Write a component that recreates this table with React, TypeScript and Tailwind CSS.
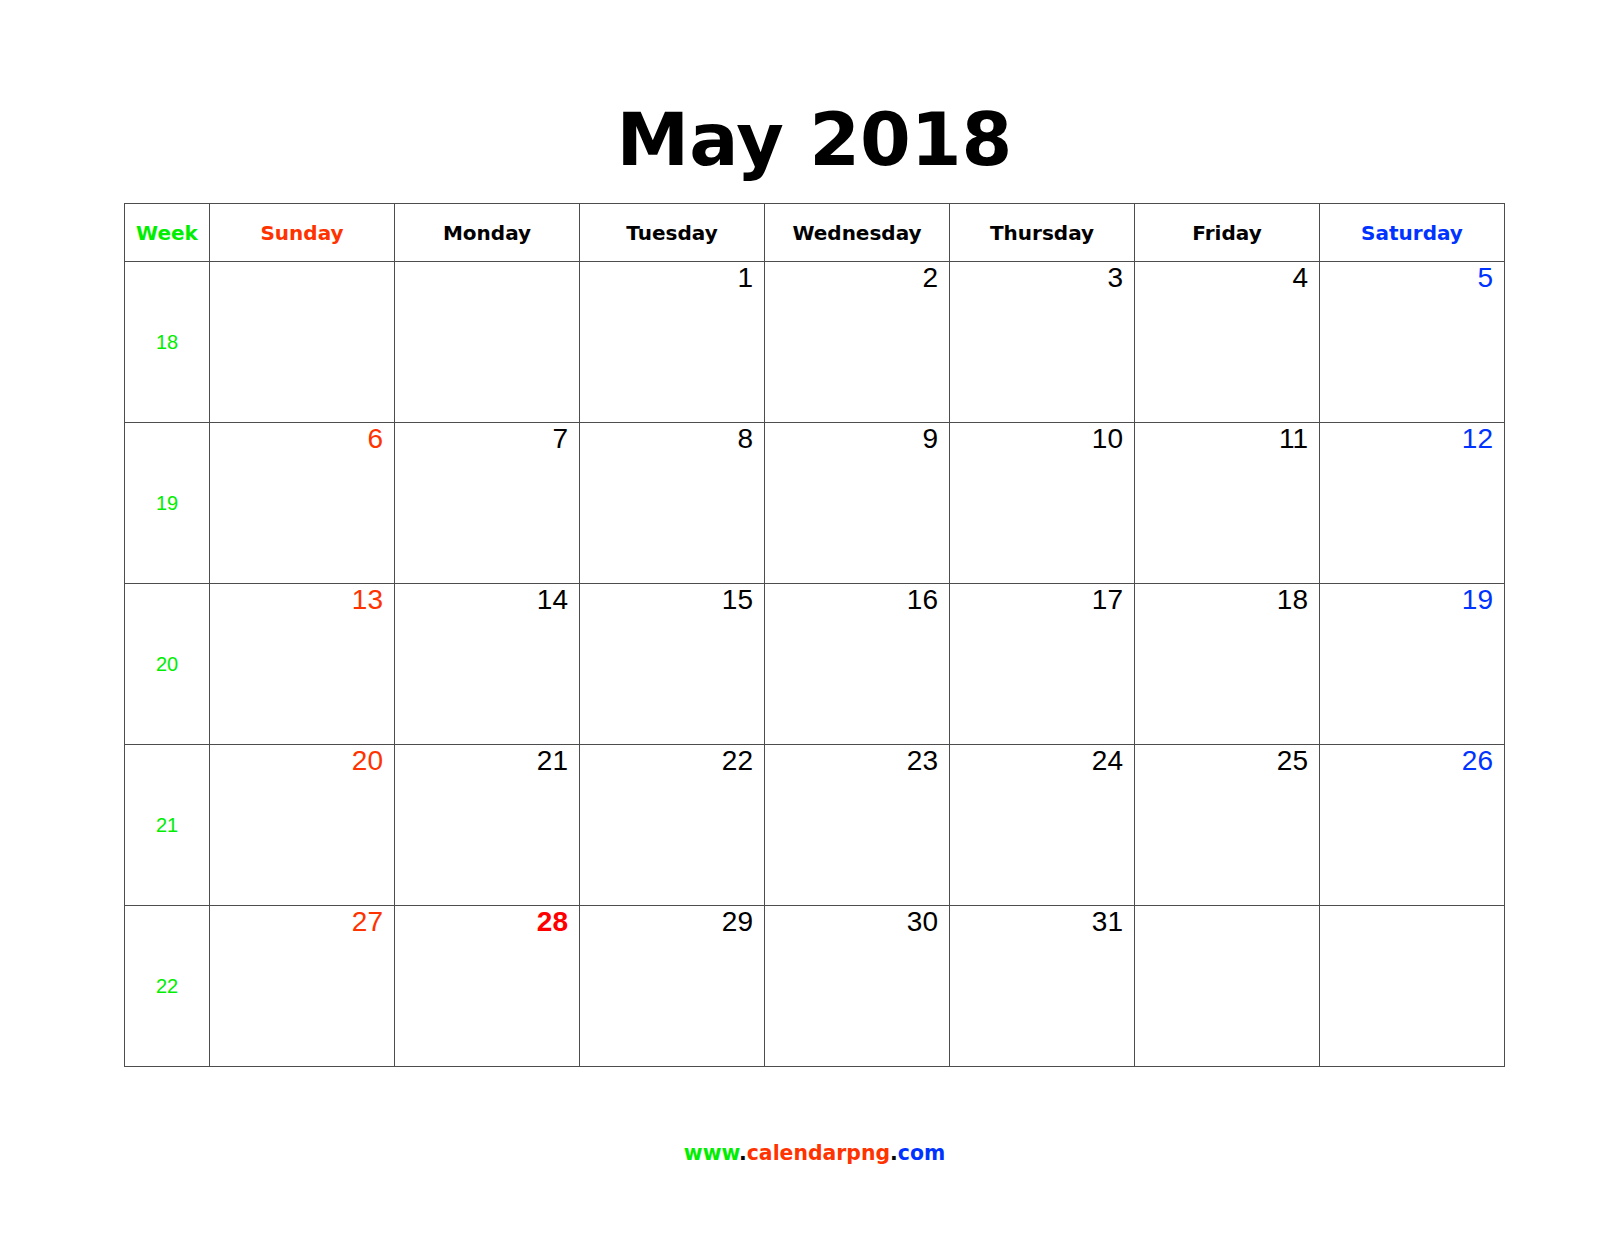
import React from "react";

const days = [
  { name: "Sunday", color: "text-[#ff3300]" },
  { name: "Monday", color: "text-black" },
  { name: "Tuesday", color: "text-black" },
  { name: "Wednesday", color: "text-black" },
  { name: "Thursday", color: "text-black" },
  { name: "Friday", color: "text-black" },
  { name: "Saturday", color: "text-[#0033ff]" },
];

const weeks: { wk: number; dates: (number | null)[] }[] = [
  { wk: 18, dates: [null, null, 1, 2, 3, 4, 5] },
  { wk: 19, dates: [6, 7, 8, 9, 10, 11, 12] },
  { wk: 20, dates: [13, 14, 15, 16, 17, 18, 19] },
  { wk: 21, dates: [20, 21, 22, 23, 24, 25, 26] },
  { wk: 22, dates: [27, 28, 29, 30, 31, null, null] },
];

const verdana = { fontFamily: '"DejaVu Sans", Verdana, sans-serif' };
const arial = { fontFamily: '"Liberation Sans", Arial, sans-serif' };

export default function App() {
  return (
    <div className="w-[1600px] h-[1236px] bg-white pl-[124px]">
      <div className="w-[1381px]">
        <h1
          className="pt-[103px] text-center text-[73px] font-bold leading-none text-black"
          style={verdana}
        >
          May 2018
        </h1>
        <div className="mt-[27px] grid grid-cols-[85px_repeat(7,185px)] border-t border-l border-[#4d4d4d]">
          <div
            className="h-[58px] flex items-center justify-center pt-[1px] border-r border-b border-[#4d4d4d] text-[20px] font-bold leading-none text-[#00ee00]"
            style={verdana}
          >
            Week
          </div>
          {days.map((d) => (
            <div
              key={d.name}
              className={`h-[58px] flex items-center justify-center pt-[1px] border-r border-b border-[#4d4d4d] text-[20px] font-bold leading-none ${d.color}`}
              style={verdana}
            >
              {d.name}
            </div>
          ))}
          {weeks.map((w) => (
            <React.Fragment key={w.wk}>
              <div
                className="h-[161px] flex items-center justify-center border-r border-b border-[#4d4d4d] text-[20px] leading-none text-[#00ee00]"
                style={arial}
              >
                {w.wk}
              </div>
              {w.dates.map((dt, i) => {
                let cls = "text-black";
                if (i === 0) cls = "text-[#ff3300]";
                if (i === 6) cls = "text-[#0033ff]";
                if (dt === 28) cls = "text-[#ff0000] font-bold";
                return (
                  <div
                    key={i}
                    className={`h-[161px] flex justify-end items-start pt-[2px] pr-[11px] border-r border-b border-[#4d4d4d] text-[28px] leading-none ${cls}`}
                    style={arial}
                  >
                    {dt ?? ""}
                  </div>
                );
              })}
            </React.Fragment>
          ))}
        </div>
        <div
          className="mt-[76px] text-center text-[20.4px] font-bold leading-none"
          style={verdana}
        >
          <span className="text-[#00ee00]">www</span>
          <span className="text-black">.</span>
          <span className="text-[#ff3300]">calendarpng</span>
          <span className="text-black">.</span>
          <span className="text-[#0033ff]">com</span>
        </div>
      </div>
    </div>
  );
}
